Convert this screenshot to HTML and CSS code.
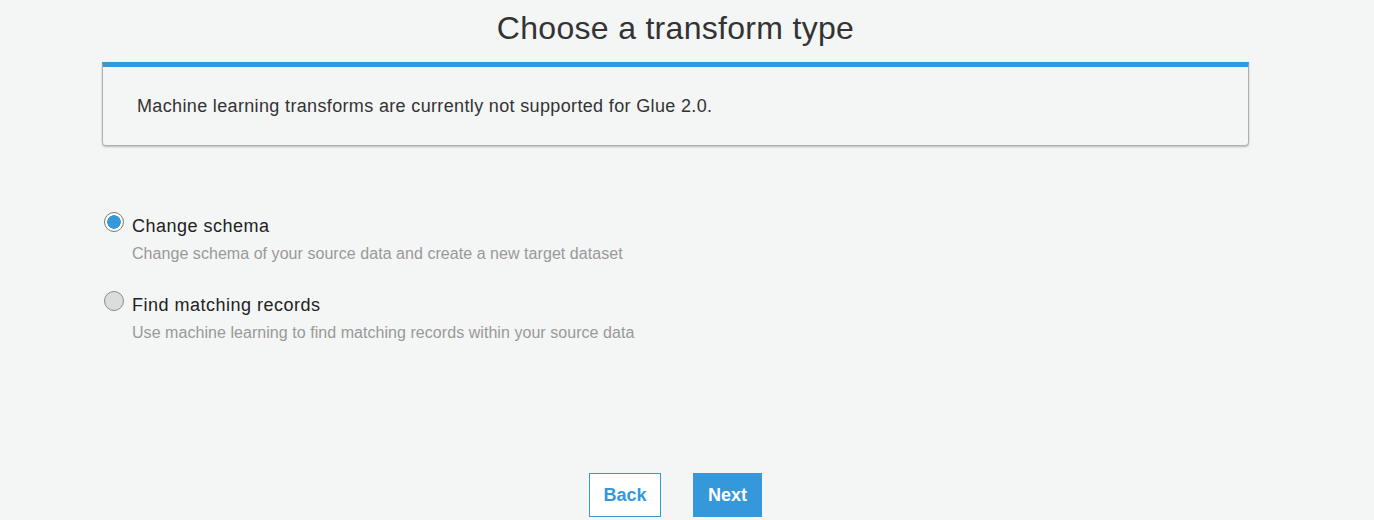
FILE: index.html
```html
<!DOCTYPE html>
<html>
<head>
<meta charset="utf-8">
<link rel="stylesheet" href="styles.css">
</head>
<body>
<div class="page">
  <h1 class="title">Choose a transform type</h1>
  <div class="notice">Machine learning transforms are currently not supported for Glue 2.0.</div>
  <div class="options">
    <label class="option">
      <span class="radio checked"></span>
      <span class="label">Change schema</span>
      <span class="desc">Change schema of your source data and create a new target dataset</span>
    </label>
    <label class="option">
      <span class="radio"></span>
      <span class="label">Find matching records</span>
      <span class="desc">Use machine learning to find matching records within your source data</span>
    </label>
  </div>
  <div class="actions">
    <button class="btn btn-secondary">Back</button>
    <button class="btn btn-primary">Next</button>
  </div>
</div>
</body>
</html>
```
FILE: styles.css
```css
html, body {
  margin: 0;
  padding: 0;
  background: #f4f5f5;
  font-family: "Liberation Sans", Arial, sans-serif;
  color: #333;
}
.page {
  width: 1147px;
  padding-left: 102px;
}
.title {
  margin: 0;
  height: 56px;
  line-height: 56px;
  font-size: 32px;
  letter-spacing: 0.3px;
  font-weight: normal;
  text-align: center;
  color: #333;
}
.notice {
  margin-top: 6px;
  border: 1px solid #b0b0b0;
  border-top: 5px solid #3498db;
  border-radius: 0 0 4px 4px;
  box-shadow: 0 1px 2px rgba(0,0,0,0.25);
  padding: 28px 34px;
  line-height: 22px;
  font-size: 18px;
  letter-spacing: 0.35px;
  color: #333;
}
.options {
  margin-top: 68px;
  padding-left: 2px;
  display: flex;
  flex-direction: column;
  gap: 29px;
}
.option {
  display: grid;
  grid-template-columns: 20px 1fr;
  column-gap: 8px;
}
.radio {
  grid-row: 1;
  grid-column: 1;
  width: 20px;
  height: 20px;
  box-sizing: border-box;
  margin-top: -2px;
  border-radius: 50%;
  border: 1px solid #8c8c8c;
  background: #dcdcdc;
}
.radio.checked {
  background: radial-gradient(circle, #3498db 0, #3498db 6.5px, #fff 7px);
  border-color: #7a7a7a;
}
.label {
  grid-row: 1;
  grid-column: 2;
  font-size: 18px;
  letter-spacing: 0.5px;
  line-height: 24px;
  color: #222;
}
.desc {
  grid-row: 2;
  grid-column: 2;
  margin-top: 6px;
  font-size: 16px;
  letter-spacing: 0.05px;
  line-height: 20px;
  color: #999;
}
.actions {
  margin-top: 130px;
  display: flex;
  justify-content: center;
  gap: 32px;
}
.btn {
  height: 44px;
  font-family: "Liberation Sans", Arial, sans-serif;
  font-size: 18px;
  font-weight: bold;
  border: 1px solid #3498db;
  border-radius: 0;
  cursor: pointer;
}
.btn-secondary {
  width: 72px;
  background: #fff;
  color: #3498db;
}
.btn-primary {
  width: 69px;
  background: #3498db;
  color: #fff;
}
```
